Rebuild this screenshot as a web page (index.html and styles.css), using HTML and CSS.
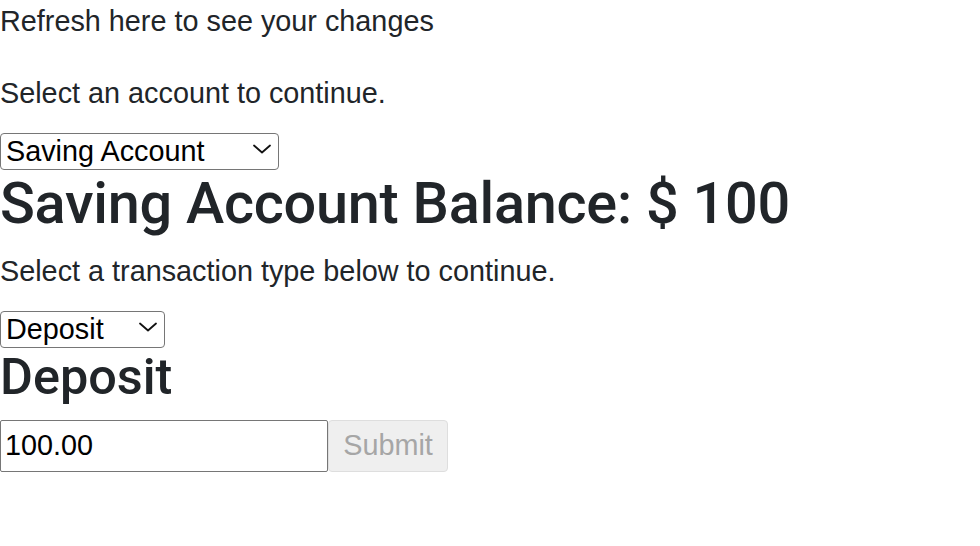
FILE: index.html
```html
<!DOCTYPE html>
<html>
<head>
<meta charset="utf-8">
<link rel="stylesheet" href="styles.css">
</head>
<body>
<p class="note">Refresh here to see your changes</p>
<label class="label">Select an account to continue.</label>
<div class="select-wrap select-account">
  <select class="select"><option>Saving Account</option><option>Checking Account</option></select>
  <svg class="chev" width="18" height="10" viewBox="0 0 18 10"><path d="M1 1.5 L9 8.5 L17 1.5" fill="none" stroke="#111" stroke-width="1.8" stroke-linecap="round" stroke-linejoin="round"/></svg>
</div>
<h2 class="balance">Saving Account Balance: $ 100</h2>
<label class="label">Select a transaction type below to continue.</label>
<div class="select-wrap select-type">
  <select class="select"><option>Deposit</option><option>Withdraw</option></select>
  <svg class="chev" width="18" height="10" viewBox="0 0 18 10"><path d="M1 1.5 L9 8.5 L17 1.5" fill="none" stroke="#111" stroke-width="1.8" stroke-linecap="round" stroke-linejoin="round"/></svg>
</div>
<h3 class="type-title">Deposit</h3>
<form class="row">
  <input class="amount" type="text" value="100.00">
  <button class="submit" type="button" disabled>Submit</button>
</form>
</body>
</html>
```
FILE: styles.css
```css
html, body {
  margin: 0;
  padding: 0;
  background: #fff;
}
body {
  font-family: "Liberation Sans", Arial, sans-serif;
  font-size: 28.8px;
  line-height: 1.5;
  color: #212529;
}
.note {
  margin: 0 0 28.8px;
}
.label {
  display: block;
  margin: 0 0 14.4px;
}
.select-wrap {
  position: relative;
  height: 37px;
}
.select-account { width: 279px; }
.select-type { width: 165px; }
.select {
  appearance: none;
  -webkit-appearance: none;
  box-sizing: border-box;
  width: 100%;
  height: 37px;
  margin: 0;
  padding: 0 0 0 5px;
  border: 1px solid #767676;
  border-radius: 4px;
  background: #fff;
  color: #000;
  font-family: inherit;
  font-size: 28.8px;
  line-height: 35px;
}
.chev {
  position: absolute;
  right: 8px;
  top: 14px;
  pointer-events: none;
}
.balance {
  margin: 0 0 12px;
  padding-top: 2.4px;
  font-family: Roboto, "Liberation Sans", sans-serif;
  font-size: 57.6px;
  font-weight: 500;
  line-height: 1.2;
  letter-spacing: -0.25px;
}
.type-title {
  margin: 0 0 12px;
  padding-top: 2.4px;
  font-family: Roboto, "Liberation Sans", sans-serif;
  font-size: 50.4px;
  font-weight: 500;
  line-height: 1.2;
}
.row {
  display: flex;
  margin: 2px 0 0;
}
.amount {
  box-sizing: border-box;
  width: 328px;
  height: 52px;
  margin: 0;
  padding: 0 4px;
  border: 1px solid #767676;
  border-radius: 2px;
  font-family: inherit;
  font-size: 28.8px;
  color: #000;
  background: #fff;
}
.submit {
  box-sizing: border-box;
  width: 120px;
  height: 52px;
  margin: 0;
  padding: 0;
  border: 1px solid #dedede;
  border-radius: 4px;
  background: #efefef;
  color: #a6a6a6;
  font-family: inherit;
  font-size: 28.8px;
}
```
